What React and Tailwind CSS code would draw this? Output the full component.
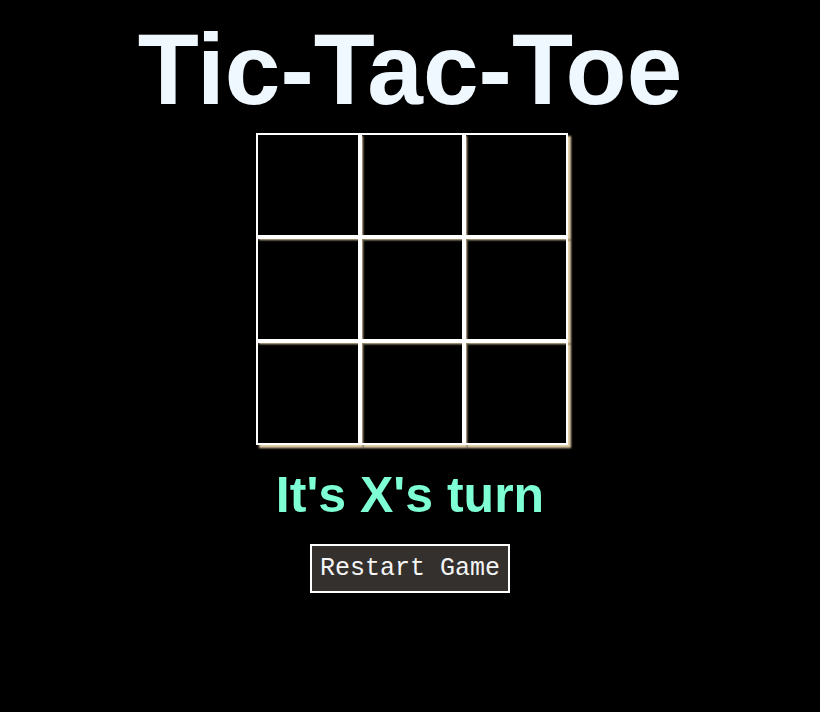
import React, { useState } from 'react';

// Simple tic-tac-toe board on a black page
export default function App() {
  const [cells, setCells] = useState(Array(9).fill(null));
  const [turn, setTurn] = useState('X');

  const play = (i) => {
    if (cells[i]) return;
    const next = cells.slice();
    next[i] = turn;
    setCells(next);
    setTurn(turn === 'X' ? 'O' : 'X');
  };

  const restart = () => {
    setCells(Array(9).fill(null));
    setTurn('X');
  };

  return (
    <div className="min-h-[712px] w-full bg-black flex flex-col items-center font-['Liberation_Sans',Arial,sans-serif]">
      <h1 className="mt-[14px] text-[100px] leading-[110px] font-bold text-[#f0f8ff]">Tic-Tac-Toe</h1>

      <div className="mt-[9px] ml-[4px] grid grid-cols-[repeat(3,104px)]">
        {cells.map((c, i) => (
          <div
            key={i}
            onClick={() => play(i)}
            className="w-[104px] h-[104px] border-2 border-white shadow-[3px_3px_2px_#e2cda9] flex items-center justify-center text-[64px] font-bold text-white cursor-pointer"
          >
            {c}
          </div>
        ))}
      </div>

      <p className="mt-[22px] text-[50px] leading-[57px] font-bold text-[#7fffd4]">It's {turn}'s turn</p>

      <button
        onClick={restart}
        className="mt-[20px] border-2 border-white bg-[#34302e] px-[8px] py-[8px] font-['Courier_New','Nimbus_Mono_PS','FreeMono','Liberation_Mono',monospace] text-[25px] leading-[29px] text-[#f5f5f5]"
      >
        Restart Game
      </button>
    </div>
  );
}
